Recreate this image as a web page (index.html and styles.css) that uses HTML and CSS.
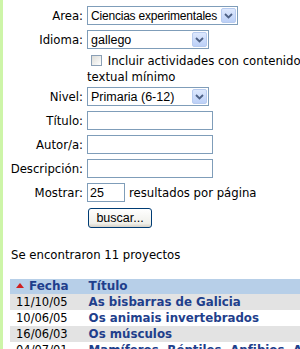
FILE: index.html
```html
<!DOCTYPE html>
<html lang="es">
<head>
<meta charset="utf-8">
<link rel="stylesheet" href="styles.css">
</head>
<body>
<div class="page">
  <form class="search">
    <label class="lbl">Area:</label>
    <div class="sel w150"><span class="val narrow">Ciencias experimentales</span><span class="arrow"><svg width="9" height="6" viewBox="0 0 9 6"><path d="M1 1 L4.5 4.5 L8 1" fill="none" stroke="#4d6185" stroke-width="1.8"/></svg></span></div>

    <label class="lbl">Idioma:</label>
    <div class="sel w122"><span class="val">gallego</span><span class="arrow"><svg width="9" height="6" viewBox="0 0 9 6"><path d="M1 1 L4.5 4.5 L8 1" fill="none" stroke="#4d6185" stroke-width="1.8"/></svg></span></div>

    <span></span>
    <div class="check"><span class="box"></span> Incluir actividades con contenido textual mínimo</div>

    <label class="lbl">Nivel:</label>
    <div class="sel w122"><span class="val">Primaria (6-12)</span><span class="arrow"><svg width="9" height="6" viewBox="0 0 9 6"><path d="M1 1 L4.5 4.5 L8 1" fill="none" stroke="#4d6185" stroke-width="1.8"/></svg></span></div>

    <label class="lbl">Título:</label>
    <div class="inp w126"></div>

    <label class="lbl">Autor/a:</label>
    <div class="inp w126"></div>

    <label class="lbl">Descripción:</label>
    <div class="inp w126"></div>

    <label class="lbl">Mostrar:</label>
    <div class="row"><div class="inp w38">25</div><span>resultados por página</span></div>

    <span></span>
    <div><span class="btn">buscar...</span></div>
  </form>

  <p class="count">Se encontraron 11 proyectos</p>

  <table class="results">
    <thead>
      <tr><th class="c1"><span class="tri"></span>Fecha</th><th class="c2">Título</th></tr>
    </thead>
    <tbody>
      <tr class="alt"><td class="c1">11/10/05</td><td class="c2">As bisbarras de Galicia</td></tr>
      <tr><td class="c1">10/06/05</td><td class="c2">Os animais invertebrados</td></tr>
      <tr class="alt"><td class="c1">16/06/03</td><td class="c2">Os músculos</td></tr>
      <tr><td class="c1">04/07/01</td><td class="c2">Mamíferos, Réptiles, Anfibios, Aves e Peixes</td></tr>
    </tbody>
  </table>
</div>
</body>
</html>
```
FILE: styles.css
```css
html, body {
  margin: 0;
  padding: 0;
  background: #fff;
}
body {
  font-family: "DejaVu Sans", Verdana, sans-serif;
  font-size: 11.7px;
  color: #000;
  overflow: hidden;
}
.page {
  border-left: 3px solid #cdf5a8;
  min-height: 349px;
  width: 297px;
  overflow: hidden;
}
.search {
  display: grid;
  grid-template-columns: 80px 213px;
  column-gap: 4px;
  row-gap: 5px;
  padding-top: 6px;
  align-items: center;
}
.lbl {
  text-align: right;
  white-space: nowrap;
}
.sel, .inp {
  box-sizing: border-box;
  height: 19px;
  border: 1px solid #7f9db9;
  background: #fff;
  font-family: "Liberation Sans", Arial, sans-serif;
  font-size: 12.5px;
  display: flex;
  align-items: center;
  white-space: nowrap;
  overflow: hidden;
}
.sel .val {
  padding-left: 3px;
  flex: 1;
}
.sel .val.narrow {
  font-size: 12px;
  letter-spacing: -0.2px;
}
.sel .arrow {
  flex: none;
  width: 15px;
  height: 15px;
  margin-right: 1px;
  box-sizing: border-box;
  border: 1px solid #b7cbef;
  border-radius: 2px;
  background: linear-gradient(#dde8fd, #bcd0f7);
  display: flex;
  align-items: center;
  justify-content: center;
}
.w150 { width: 151px; }
.w122 { width: 122px; }
.w126 { width: 126px; }
.w38 { width: 38px; padding-left: 2px; }
.check {
  line-height: 16px;
  margin-top: -1px;
  margin-bottom: -3px;
  margin-right: -4px;
}
.box {
  display: inline-block;
  width: 11px;
  height: 11px;
  box-sizing: border-box;
  border: 1px solid #8ba0b6;
  background: linear-gradient(135deg, #dcdcd7, #fff);
  vertical-align: -1px;
  margin-left: 4px;
  margin-right: 2px;
}
.row {
  display: flex;
  align-items: center;
  gap: 4px;
}
.btn {
  display: inline-block;
  box-sizing: border-box;
  width: 64px;
  height: 20px;
  margin-left: 1px;
  margin-top: 1px;
  border: 1px solid #003c74;
  border-radius: 3px;
  background: linear-gradient(#fff, #f0f0ea 80%, #d6d0c5);
  font-family: "Liberation Sans", Arial, sans-serif;
  font-size: 12.5px;
  text-align: center;
  line-height: 18px;
}
.count {
  margin: 20px 0 0 8px;
}
.results {
  margin: 17px 0 0 7px;
  border-collapse: collapse;
  white-space: nowrap;
}
.results th, .results td {
  padding: 0 6px;
  height: 16px;
  line-height: 16px;
  text-align: left;
}
.results th {
  height: 15px;
  line-height: 15px;
  background: #b7cfe8;
  color: #1f3f8c;
  font-weight: bold;
  font-size: 12px;
}
.results td.c1 {
  padding-right: 14px;
  font-size: 11.5px;
}
.results td.c2 {
  color: #1f3f8c;
  font-weight: bold;
  font-size: 11.8px;
}
.results th.c1 { padding-right: 14px; }
.results tr.alt td {
  background: #e3e3e3;
}
.tri {
  display: inline-block;
  width: 0;
  height: 0;
  border-left: 4px solid transparent;
  border-right: 4px solid transparent;
  border-bottom: 5px solid #d02020;
  margin-right: 5px;
  vertical-align: 2px;
}
```
